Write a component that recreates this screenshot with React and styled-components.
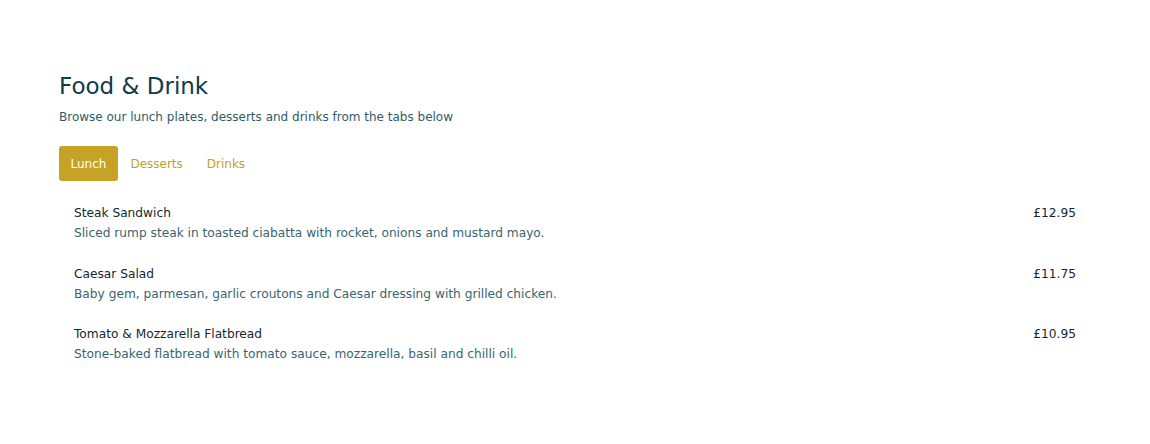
import React, { useState } from 'react';
import styled, { createGlobalStyle } from 'styled-components';

const GlobalStyle = createGlobalStyle`
    body {
        margin: 0;
        background: #ffffff;
        font-family: "DejaVu Sans", "Noto Sans", sans-serif;
    }
`;

const menu = {
    Lunch: [
        { name: 'Steak Sandwich', desc: 'Sliced rump steak in toasted ciabatta with rocket, onions and mustard mayo.', price: '£12.95' },
        { name: 'Caesar Salad', desc: 'Baby gem, parmesan, garlic croutons and Caesar dressing with grilled chicken.', price: '£11.75' },
        { name: 'Tomato & Mozzarella Flatbread', desc: 'Stone-baked flatbread with tomato sauce, mozzarella, basil and chilli oil.', price: '£10.95' },
    ],
    Desserts: [],
    Drinks: [],
};

function App() {
    const [tab, setTab] = useState('Lunch');
    return (
        <>
            <GlobalStyle />
            <MainBody>
                <Title>Food &amp; Drink</Title>
                <Subtitle>Browse our lunch plates, desserts and drinks from the tabs below</Subtitle>
                <Tabs>
                    {Object.keys(menu).map((t) => (
                        <Tab key={t} active={t === tab} onClick={() => setTab(t)}>{t}</Tab>
                    ))}
                </Tabs>
                <Items>
                    {menu[tab].map((item) => (
                        <Item key={item.name}>
                            <ItemText>
                                <ItemName>{item.name}</ItemName>
                                <ItemDesc>{item.desc}</ItemDesc>
                            </ItemText>
                            <Price>{item.price}</Price>
                        </Item>
                    ))}
                </Items>
            </MainBody>
        </>
    );
}

const MainBody = styled.div`
    padding: 70px 59px 0;
`;
const Title = styled.h1`
    margin: 0;
    font-size: 23px;
    font-weight: 400;
    line-height: 32px;
    color: #0f3b4d;
`;
const Subtitle = styled.p`
    margin: 7px 0 0;
    font-size: 12px;
    line-height: 16px;
    color: #315b6a;
`;
const Tabs = styled.div`
    display: flex;
    gap: 1px;
    margin-top: 21px;
`;
const Tab = styled.button.withConfig({ shouldForwardProp: (p) => p !== 'active' })`
    height: 35px;
    padding: 0 11.5px;
    border: none;
    border-radius: 3px;
    font-family: inherit;
    font-size: 12px;
    cursor: pointer;
    background: ${(p) => (p.active ? '#c6a227' : 'transparent')};
    color: ${(p) => (p.active ? '#ffffff' : '#c2a12a')};
`;
const Items = styled.div`
    display: flex;
    flex-direction: column;
    gap: 20.5px;
    margin-top: 22px;
    padding: 0 15px;
`;
const Item = styled.div`
    display: flex;
    justify-content: space-between;
    align-items: flex-start;
`;
const ItemText = styled.div``;
const ItemName = styled.div`
    font-size: 12.2px;
    line-height: 20px;
    color: #15262f;
`;
const ItemDesc = styled.div`
    font-size: 12.2px;
    line-height: 20px;
    color: #3a6470;
`;
const Price = styled.div`
    font-size: 12.2px;
    line-height: 20px;
    color: #15262f;
`;

export default App;
